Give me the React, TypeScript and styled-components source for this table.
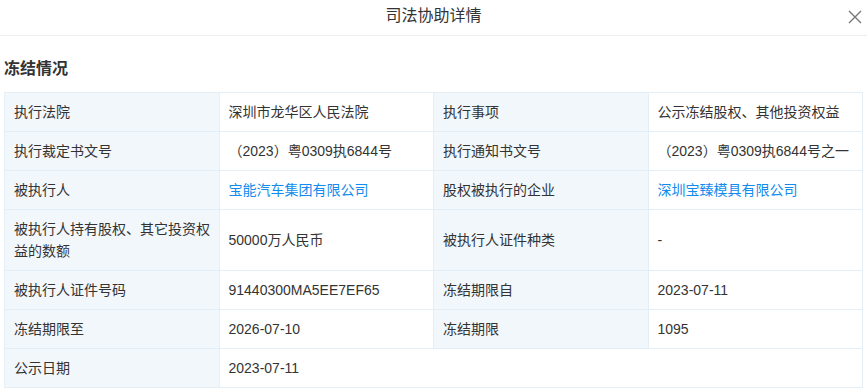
import React from "react";
import styled, { createGlobalStyle } from "styled-components";

const GlobalStyle = createGlobalStyle`
  html, body {
    margin: 0;
    padding: 0;
    background: #ffffff;
  }
  body {
    font-family: "Liberation Sans", "Noto Sans CJK SC", Arial, sans-serif;
    color: #333333;
  }
`;

const Modal = styled.div`
  width: 867px;
  background: #fff;
`;

const Header = styled.div`
  position: relative;
  height: 35px;
  border-bottom: 1px solid #eeeeee;
  display: flex;
  align-items: center;
  justify-content: center;
`;

const Title = styled.div`
  font-size: 16px;
  line-height: 22px;
  color: #333;
  margin-top: -3px;
`;

const CloseButton = styled.button`
  position: absolute;
  right: 4px;
  top: 9px;
  width: 16px;
  height: 16px;
  padding: 0;
  border: 0;
  background: transparent;
  display: flex;
  align-items: center;
  justify-content: center;
  cursor: pointer;
`;

const Body = styled.div`
  padding: 0 4px;
`;

const SectionTitle = styled.h3`
  margin: 21px 0 11px 0;
  font-size: 16px;
  line-height: 24px;
  font-weight: 600;
  color: #333;
`;

const Table = styled.table`
  width: 859px;
  border-collapse: collapse;
  table-layout: fixed;
  border: 1px solid #e4eef6;
`;

const Cell = styled.td<{ $label?: boolean }>`
  border: 1px solid #e4eef6;
  padding: 8px 4px 8px 9px;
  font-size: 14px;
  line-height: 22px;
  vertical-align: middle;
  color: #333;
  background: ${(p) => (p.$label ? "#f2f7fc" : "#ffffff")};
  word-break: break-all;
`;

const Link = styled.a`
  color: #128bed;
  text-decoration: none;
`;

type Item = { label: string; value: React.ReactNode };

const rows: Item[][] = [
  [
    { label: "执行法院", value: "深圳市龙华区人民法院" },
    { label: "执行事项", value: "公示冻结股权、其他投资权益" },
  ],
  [
    { label: "执行裁定书文号", value: "（2023）粤0309执6844号" },
    { label: "执行通知书文号", value: "（2023）粤0309执6844号之一" },
  ],
  [
    { label: "被执行人", value: <Link href="#">宝能汽车集团有限公司</Link> },
    { label: "股权被执行的企业", value: <Link href="#">深圳宝臻模具有限公司</Link> },
  ],
  [
    { label: "被执行人持有股权、其它投资权益的数额", value: "50000万人民币" },
    { label: "被执行人证件种类", value: "-" },
  ],
  [
    { label: "被执行人证件号码", value: "91440300MA5EE7EF65" },
    { label: "冻结期限自", value: "2023-07-11" },
  ],
  [
    { label: "冻结期限至", value: "2026-07-10" },
    { label: "冻结期限", value: "1095" },
  ],
  [{ label: "公示日期", value: "2023-07-11" }],
];

export default function App() {
  return (
    <Modal>
      <GlobalStyle />
      <Header>
        <Title>司法协助详情</Title>
        <CloseButton aria-label="close">
          <svg width="14" height="14" viewBox="0 0 14 14">
            <path d="M1 1 L13 13 M13 1 L1 13" stroke="#777" strokeWidth="1.4" fill="none" />
          </svg>
        </CloseButton>
      </Header>
      <Body>
        <SectionTitle>冻结情况</SectionTitle>
        <Table>
          <colgroup>
            <col />
            <col />
            <col />
            <col />
          </colgroup>
          <tbody>
            {rows.map((row, i) => (
              <tr key={i}>
                {row.map((item, j) => (
                  <React.Fragment key={j}>
                    <Cell $label>{item.label}</Cell>
                    <Cell colSpan={row.length === 1 ? 3 : 1}>{item.value}</Cell>
                  </React.Fragment>
                ))}
              </tr>
            ))}
          </tbody>
        </Table>
      </Body>
    </Modal>
  );
}
